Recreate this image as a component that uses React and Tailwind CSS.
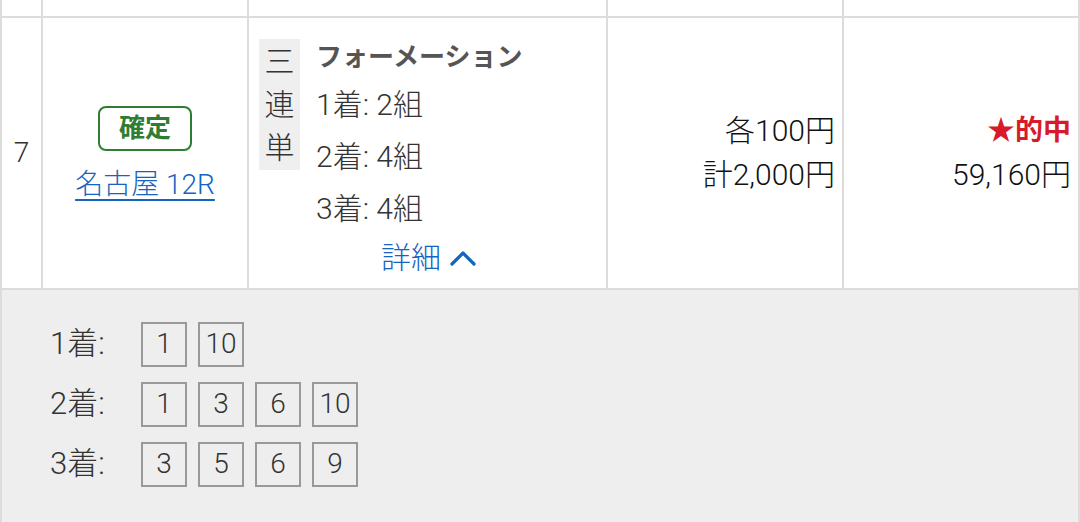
const FONT = "font-['Roboto','Noto_Sans_CJK_JP',sans-serif]"

const PICKS = [
  { label: '1着:', nums: [1, 10] },
  { label: '2着:', nums: [1, 3, 6, 10] },
  { label: '3着:', nums: [3, 5, 6, 9] }
]

const SUMMARY = ['1着: 2組', '2着: 4組', '3着: 4組']

export default function App() {
  return (
    <div className={`w-[1080px] h-[522px] overflow-hidden bg-white text-[28px] font-light text-[#333] ${FONT}`}>
      <div className="border-l-2 border-r-2 border-[#dcdcdc]">
        {/* tail of the row above */}
        <div className="flex h-[18px] border-b-2 border-[#dcdcdc]">
          <div className="w-[41px] border-r-2 border-[#dcdcdc]" />
          <div className="w-[206px] border-r-2 border-[#dcdcdc]" />
          <div className="w-[359px] border-r-2 border-[#dcdcdc]" />
          <div className="w-[236px] border-r-2 border-[#dcdcdc]" />
          <div className="flex-1" />
        </div>

        <div className="flex h-[272px] border-b-2 border-[#dcdcdc]">
          <div className="w-[41px] border-r-2 border-[#dcdcdc] flex items-center justify-center leading-none">
            7
          </div>

          <div className="w-[206px] border-r-2 border-[#dcdcdc] flex flex-col items-center justify-center pt-[4px]">
            <span className="w-[94px] h-[45px] rounded-[8px] border-2 border-[#2e7d32] text-[#2e7d32] text-[26px] font-bold flex items-center justify-center leading-none">
              確定
            </span>
            <a
              href="#"
              className="mt-[14px] leading-[40px] text-[#1565c0] underline decoration-2 underline-offset-[5px]"
            >
              名古屋 12R
            </a>
          </div>

          <div className="w-[359px] border-r-2 border-[#dcdcdc] flex pl-[10px] pt-[17px] text-[30px]">
            <div className="w-[41px] mt-[4px] h-[131px] bg-[#efefef] flex flex-col items-center justify-center leading-[43px]">
              <span>三</span>
              <span>連</span>
              <span>単</span>
            </div>
            <div className="ml-[16px] flex flex-col">
              <div className="leading-[44px] text-[26px] font-bold text-[#555]">フォーメーション</div>
              {SUMMARY.map((s) => (
                <div key={s} className="leading-[52px]">{s}</div>
              ))}
              <button className="self-start ml-[65px] flex items-center gap-[9px] leading-[46px] text-[#1565c0]">
                詳細
                <svg width="26" height="18" viewBox="0 0 26 18" fill="none" stroke="currentColor" strokeWidth="3.2" strokeLinecap="round" strokeLinejoin="round">
                  <path d="M2 15 L13 4 L24 15" />
                </svg>
              </button>
            </div>
          </div>

          <div className="w-[236px] border-r-2 border-[#dcdcdc] flex flex-col items-end justify-center pr-[7px] text-[30px] leading-[44px] text-[#111]">
            <div>各100円</div>
            <div>計2,000円</div>
          </div>

          <div className="flex-1 flex flex-col items-end justify-center pr-[7px] text-[30px] leading-[44px] text-[#111]">
            <div className="text-[#d81b2a] text-[28px] font-bold">★的中</div>
            <div>59,160円</div>
          </div>
        </div>

        <div className="bg-[#eeeeee] h-[240px] pt-[32px] pl-[48px] flex flex-col gap-[16px]">
          {PICKS.map((p) => (
            <div key={p.label} className="flex items-center h-[44px]">
              <span className="w-[91px] text-[31px]">{p.label}</span>
              <div className="flex gap-[11px]">
                {p.nums.map((n, i) => (
                  <span
                    key={i}
                    className="w-[46px] h-[45px] border-2 border-[#999] flex items-center justify-center leading-none"
                  >
                    {n}
                  </span>
                ))}
              </div>
            </div>
          ))}
        </div>
      </div>
    </div>
  )
}
